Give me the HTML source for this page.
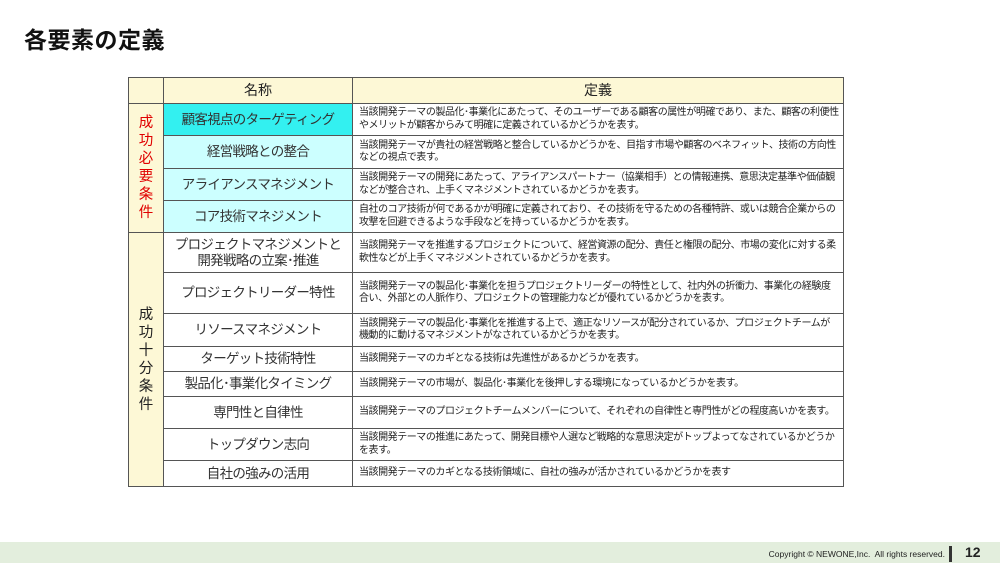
<!DOCTYPE html>
<html><head><meta charset="utf-8"><style>
body{margin:0;width:1000px;height:563px;background:#fff;position:relative;overflow:hidden;font-family:"Liberation Sans","Noto Sans CJK JP",sans-serif;color:#222}
h1{position:absolute;left:24px;top:21px;margin:0;font-size:23px;font-weight:bold;color:#111;letter-spacing:0.5px}
table{position:absolute;left:128px;top:77px;border-collapse:collapse;table-layout:fixed;width:715px}
td{border:1px solid #555;padding:0;font-size:10px;line-height:12.5px;overflow:hidden}
.l{background:#fdf8d6;text-align:center;font-size:14.5px;line-height:18px;border-bottom:1px solid #555}
.n{text-align:center;font-size:13.5px;line-height:16px;color:#333;letter-spacing:-0.7px;white-space:nowrap}
.d{padding:0 4px 0 6px;letter-spacing:-0.45px}
.h td{background:#fdf8d6;text-align:center;font-size:14px}
.c1{background:#33f0f0}.c2{background:#ccffff}
.foot{position:absolute;left:0;top:542px;width:1000px;height:21px;background:#e3eedd}
.copy{position:absolute;right:55px;top:549px;font-size:8.5px;color:#222}
.bar{position:absolute;left:949px;top:546px;width:3px;height:16px;background:#333}
.pg{position:absolute;left:965px;top:544px;font-size:14px;font-weight:bold;color:#222}
</style></head><body>
<h1>各要素の定義</h1>
<table>
<col style="width:35px"><col style="width:189px"><col style="width:491px">
<tr class="h" style="height:26px"><td></td><td>名称</td><td>定義</td></tr>
<tr style="height:32px"><td class="l" rowspan="4" style="color:#e00000">成<br>功<br>必<br>要<br>条<br>件</td><td class="n c1">顧客視点のターゲティング</td><td class="d">当該開発テーマの製品化･事業化にあたって、そのユーザーである顧客の属性が明確であり、また、顧客の利便性やメリットが顧客からみて明確に定義されているかどうかを表す。</td></tr>
<tr style="height:33px"><td class="n c2">経営戦略との整合</td><td class="d">当該開発テーマが貴社の経営戦略と整合しているかどうかを、目指す市場や顧客のベネフィット、技術の方向性などの視点で表す。</td></tr>
<tr style="height:32px"><td class="n c2">アライアンスマネジメント</td><td class="d">当該開発テーマの開発にあたって、アライアンスパートナー（協業相手）との情報連携、意思決定基準や価値観などが整合され、上手くマネジメントされているかどうかを表す。</td></tr>
<tr style="height:32px"><td class="n c2">コア技術マネジメント</td><td class="d">自社のコア技術が何であるかが明確に定義されており、その技術を守るための各種特許、或いは競合企業からの攻撃を回避できるような手段などを持っているかどうかを表す。</td></tr>
<tr style="height:40px"><td class="l" rowspan="8">成<br>功<br>十<br>分<br>条<br>件</td><td class="n">プロジェクトマネジメントと<br>開発戦略の立案･推進</td><td class="d">当該開発テーマを推進するプロジェクトについて、経営資源の配分、責任と権限の配分、市場の変化に対する柔軟性などが上手くマネジメントされているかどうかを表す。</td></tr>
<tr style="height:41px"><td class="n">プロジェクトリーダー特性</td><td class="d">当該開発テーマの製品化･事業化を担うプロジェクトリーダーの特性として、社内外の折衝力、事業化の経験度合い、外部との人脈作り、プロジェクトの管理能力などが優れているかどうかを表す。</td></tr>
<tr style="height:33px"><td class="n">リソースマネジメント</td><td class="d">当該開発テーマの製品化･事業化を推進する上で、適正なリソースが配分されているか、プロジェクトチームが機動的に動けるマネジメントがなされているかどうかを表す。</td></tr>
<tr style="height:25px"><td class="n">ターゲット技術特性</td><td class="d">当該開発テーマのカギとなる技術は先進性があるかどうかを表す。</td></tr>
<tr style="height:25px"><td class="n">製品化･事業化タイミング</td><td class="d">当該開発テーマの市場が、製品化･事業化を後押しする環境になっているかどうかを表す。</td></tr>
<tr style="height:32px"><td class="n">専門性と自律性</td><td class="d" style="white-space:nowrap">当該開発テーマのプロジェクトチームメンバーについて、それぞれの自律性と専門性がどの程度高いかを表す。</td></tr>
<tr style="height:32px"><td class="n">トップダウン志向</td><td class="d">当該開発テーマの推進にあたって、開発目標や人選など戦略的な意思決定がトップよってなされているかどうかを表す。</td></tr>
<tr style="height:26px"><td class="n">自社の強みの活用</td><td class="d">当該開発テーマのカギとなる技術領域に、自社の強みが活かされているかどうかを表す</td></tr>
</table>
<div class="foot"></div>
<div class="copy">Copyright © NEWONE,Inc.&nbsp; All rights reserved.</div>
<div class="bar"></div>
<div class="pg">12</div>
</body></html>
